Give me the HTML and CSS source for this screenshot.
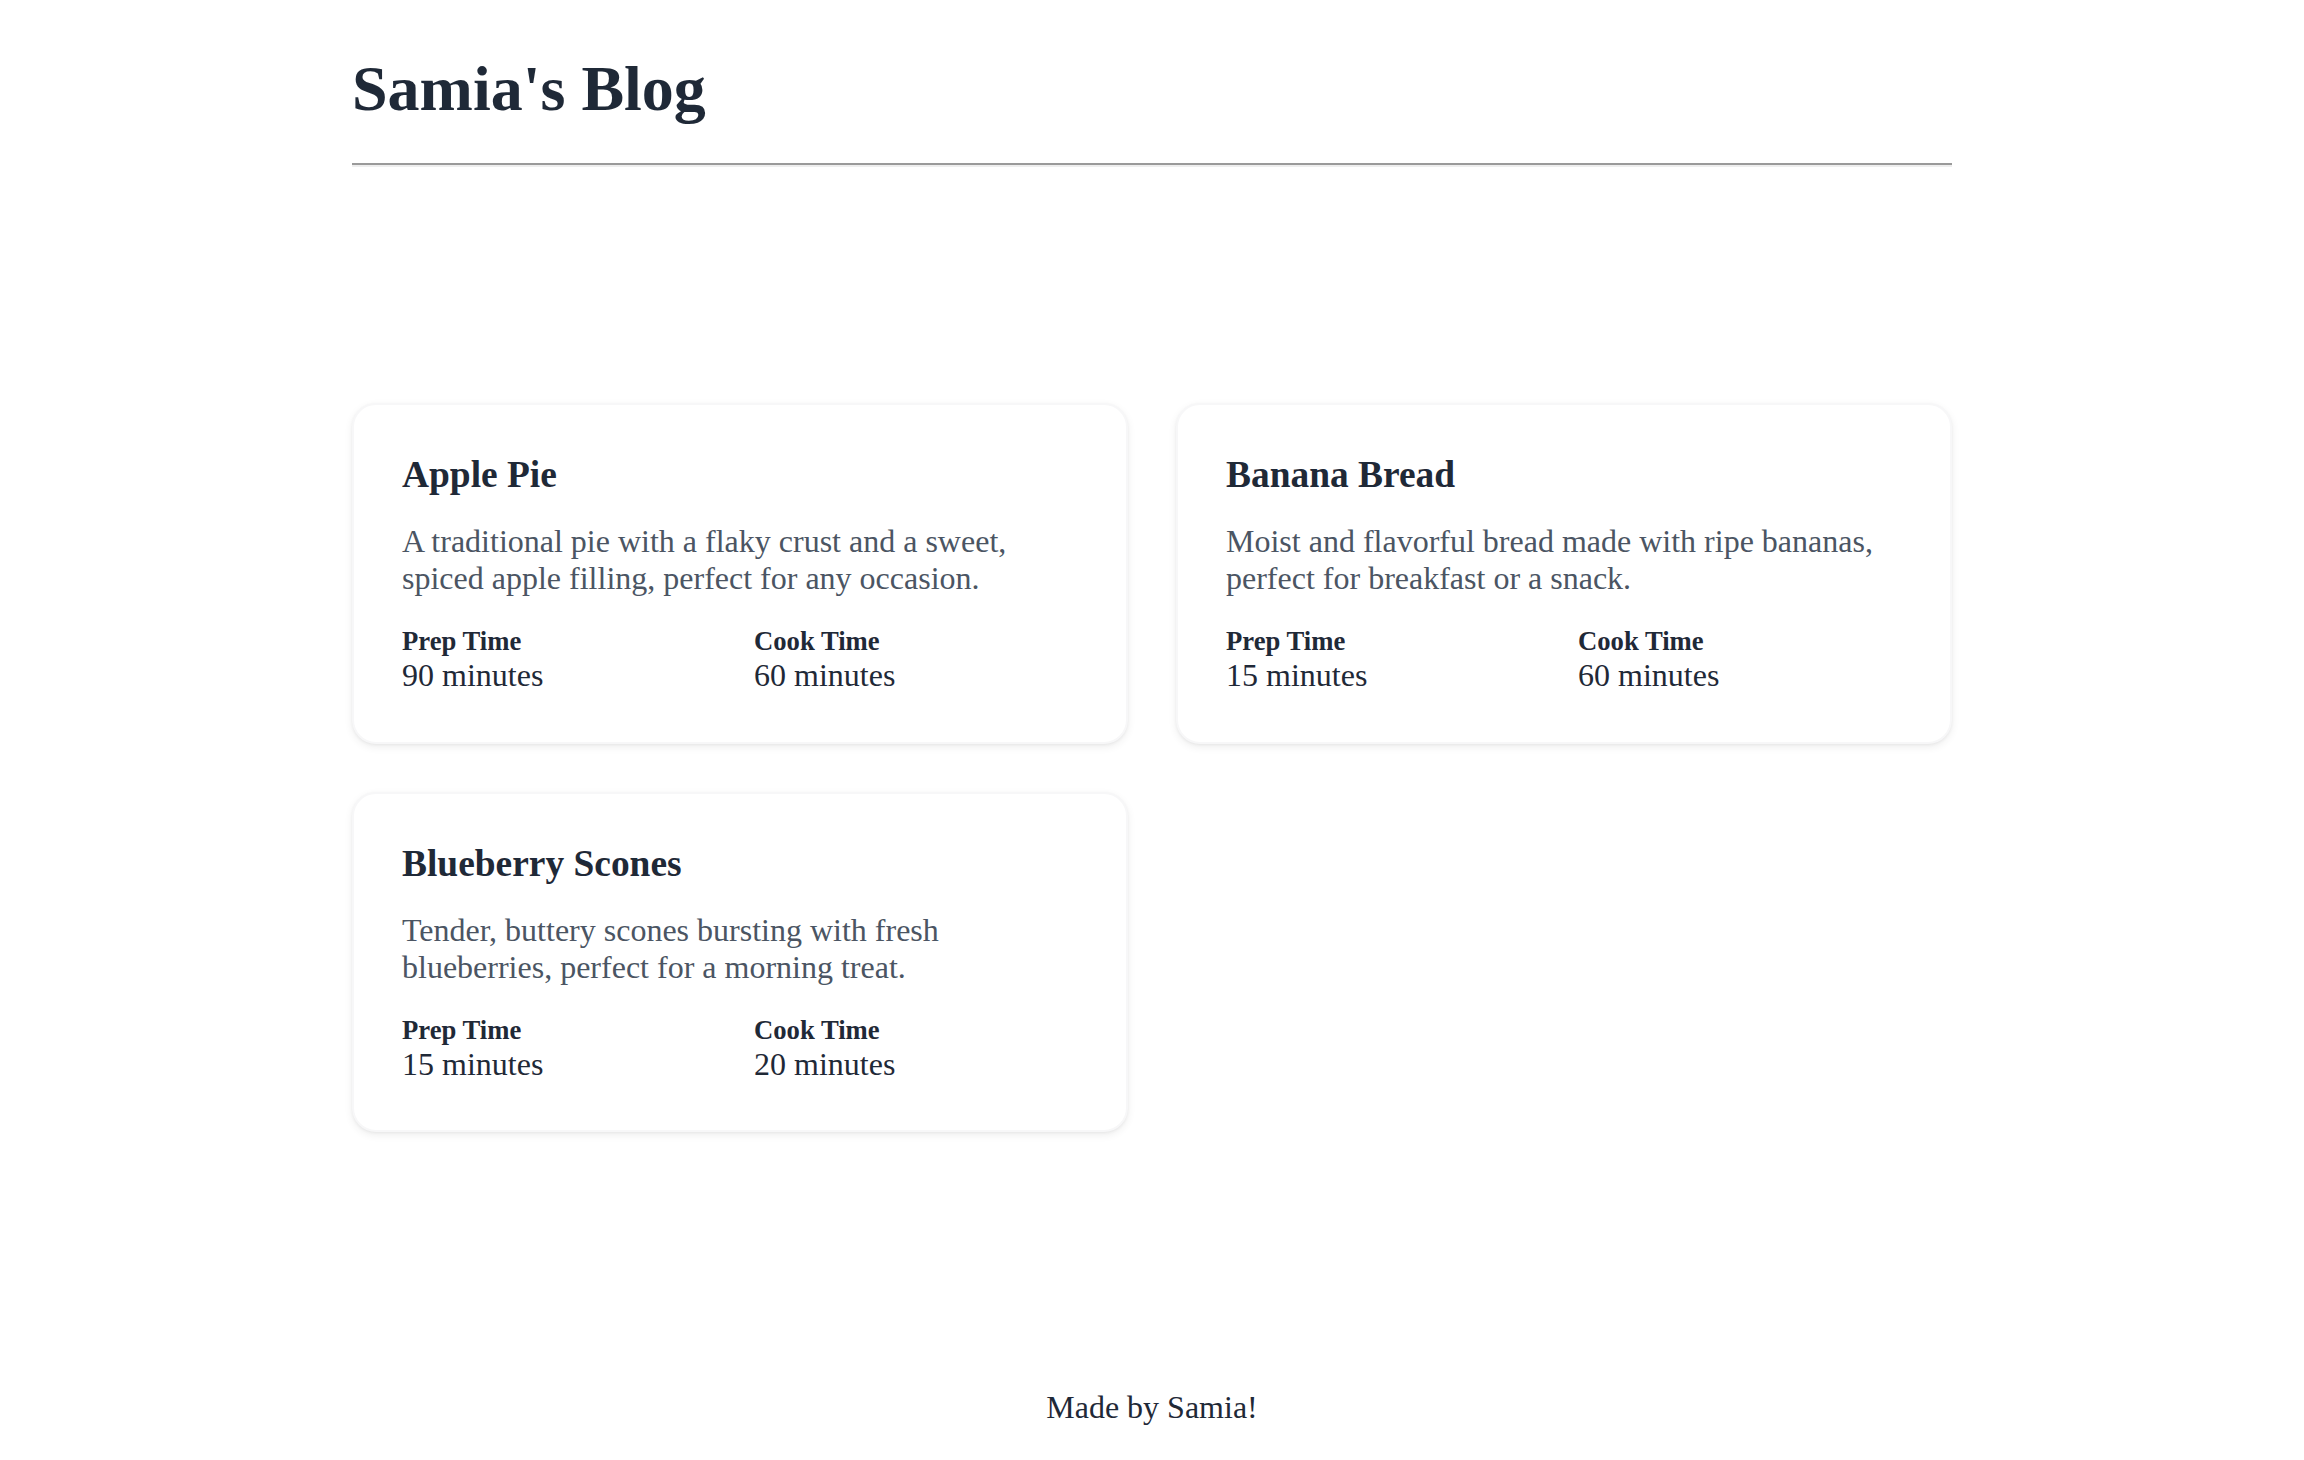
FILE: index.html
```html
<!DOCTYPE html>
<html lang="en">
<head>
<meta charset="utf-8">
<title>Samia's Blog</title>
<link rel="stylesheet" href="styles.css">
</head>
<body>
<div class="page">
  <header class="site-header">
    <h1 class="site-title">Samia's Blog</h1>
    <hr class="divider">
  </header>
  <main class="content">
    <div class="recipe-grid">
      <article class="recipe-card">
        <h3 class="recipe-title">Apple Pie</h3>
        <p class="recipe-desc">A traditional pie with a flaky crust and a sweet, spiced apple filling, perfect for any occasion.</p>
        <div class="recipe-times">
          <div class="time-item"><div class="time-label">Prep Time</div><div class="time-value">90 minutes</div></div>
          <div class="time-item"><div class="time-label">Cook Time</div><div class="time-value">60 minutes</div></div>
        </div>
      </article>
      <article class="recipe-card">
        <h3 class="recipe-title">Banana Bread</h3>
        <p class="recipe-desc">Moist and flavorful bread made with ripe bananas, perfect for breakfast or a snack.</p>
        <div class="recipe-times">
          <div class="time-item"><div class="time-label">Prep Time</div><div class="time-value">15 minutes</div></div>
          <div class="time-item"><div class="time-label">Cook Time</div><div class="time-value">60 minutes</div></div>
        </div>
      </article>
      <article class="recipe-card">
        <h3 class="recipe-title">Blueberry Scones</h3>
        <p class="recipe-desc">Tender, buttery scones bursting with fresh blueberries, perfect for a morning treat.</p>
        <div class="recipe-times">
          <div class="time-item"><div class="time-label">Prep Time</div><div class="time-value">15 minutes</div></div>
          <div class="time-item"><div class="time-label">Cook Time</div><div class="time-value">20 minutes</div></div>
        </div>
      </article>
    </div>
  </main>
  <footer class="site-footer">Made by Samia!</footer>
</div>
</body>
</html>
```

FILE: styles.css
```css
* { box-sizing: border-box; }

html, body {
  margin: 0;
  padding: 0;
  background: #ffffff;
}

body {
  font-family: "Liberation Serif", "Times New Roman", serif;
  font-size: 32px;
  line-height: 1.15;
  color: #1f2937;
}

.page {
  min-height: 100vh;
  display: flex;
  flex-direction: column;
}

.site-header {
  width: 1600px;
  margin: 0 auto;
}

.site-title {
  margin: 52px 0 37px;
  font-size: 64px;
  line-height: 1.15;
  font-weight: bold;
  color: #1f2937;
}

.divider {
  margin: 0;
  height: 0;
  border: 0;
  border-top: 2px solid #9a9a9a;
  border-bottom: 2px solid #eeeeee;
}

.content {
  width: 1600px;
  margin: 0 auto;
  padding-top: 236px;
}

.recipe-grid {
  display: grid;
  grid-template-columns: 1fr 1fr;
  gap: 48px;
}

.recipe-card {
  background: #ffffff;
  border: 2px solid #f7f7f8;
  border-radius: 24px;
  padding: 48px 48px 48px;
  box-shadow: 0 3px 8px rgba(0, 0, 0, 0.07), 0 1px 3px rgba(0, 0, 0, 0.05);
}

.recipe-title {
  margin: 0 0 27px;
  font-size: 37.44px;
  line-height: 1.15;
  font-weight: bold;
  color: #1f2937;
}

.recipe-desc {
  margin: 0 0 30px;
  font-size: 32px;
  line-height: 1.16;
  color: #4b5563;
}

.recipe-times {
  display: grid;
  grid-template-columns: 1fr 1fr;
  gap: 28px;
}

.time-label {
  font-size: 26.67px;
  line-height: 1.12;
  font-weight: bold;
  color: #1f2937;
}

.time-value {
  font-size: 32px;
  line-height: 1.15;
  color: #1f2937;
}

.site-footer {
  margin-top: auto;
  padding: 0 0 34px;
  text-align: center;
  font-size: 32px;
  line-height: 1.15;
  color: #1f2937;
}
```
